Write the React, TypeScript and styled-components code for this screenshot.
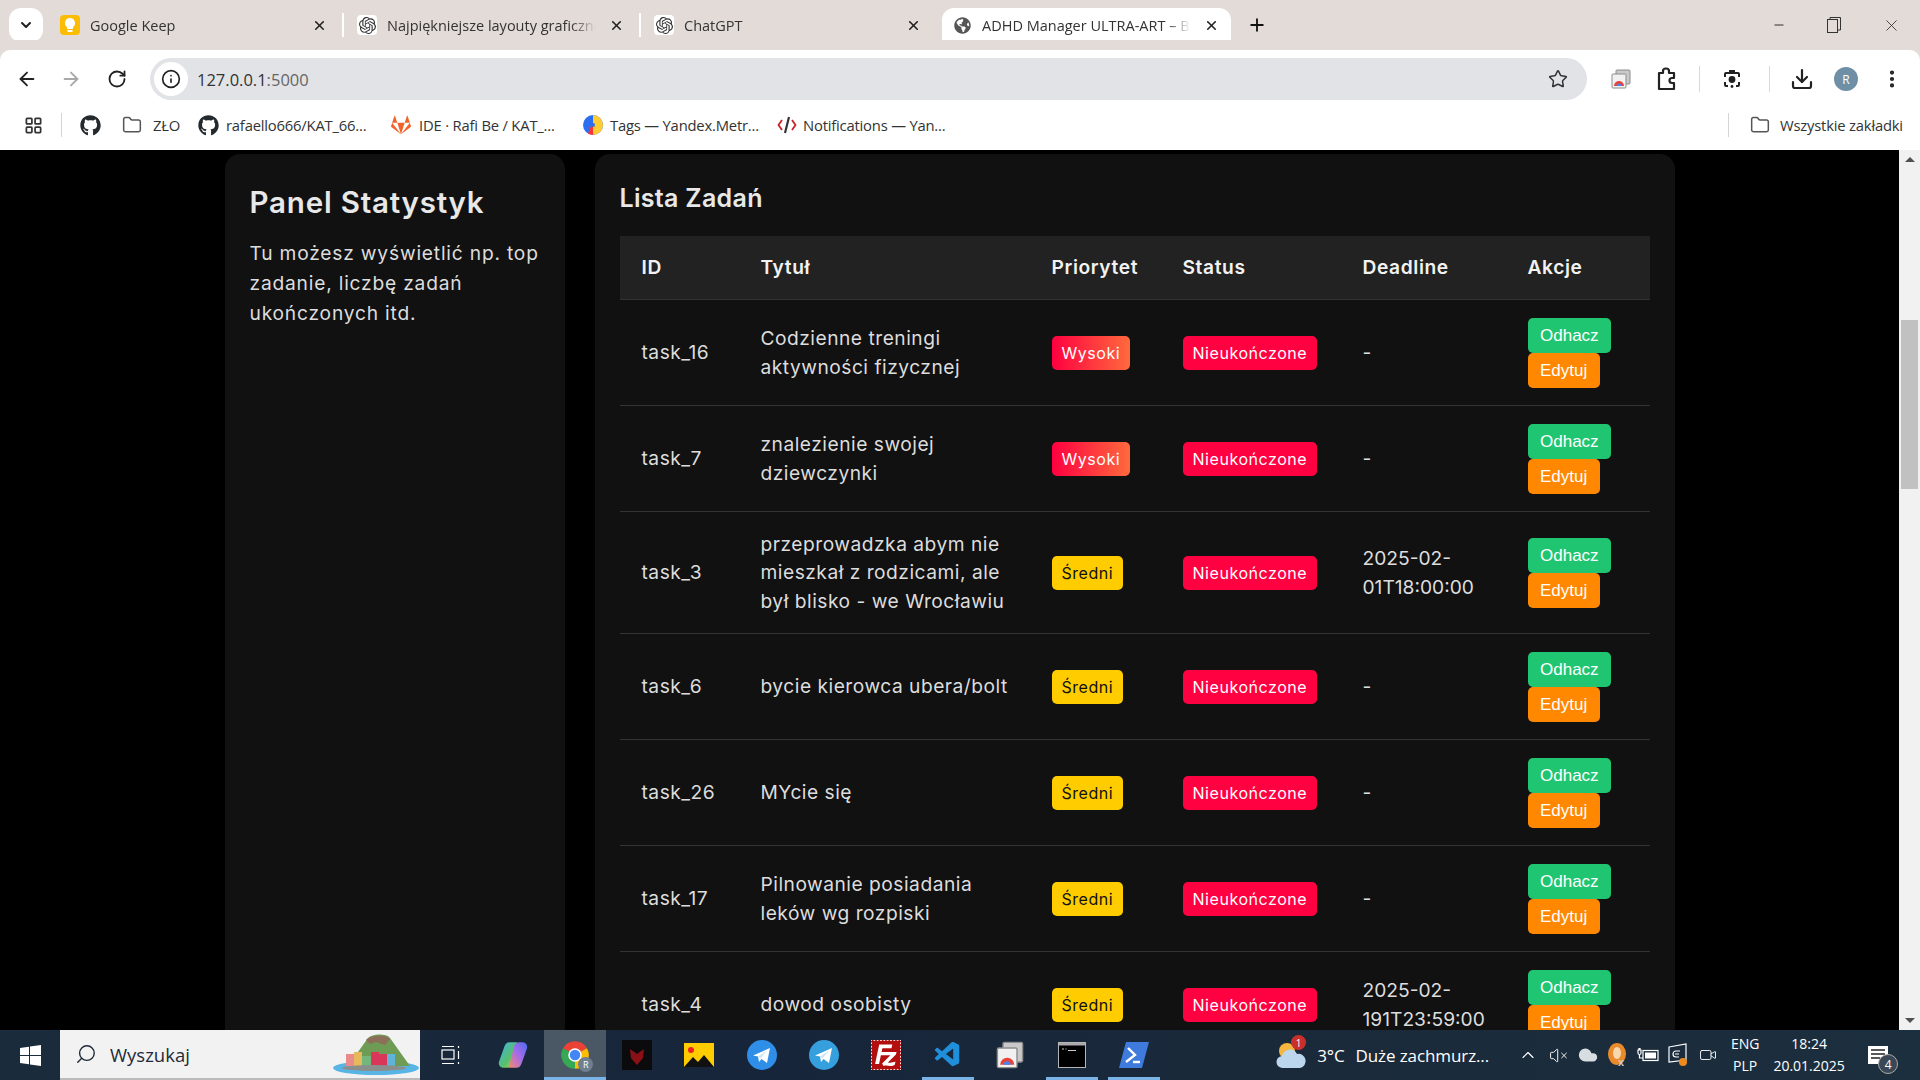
import React from "react";
import styled, { createGlobalStyle } from "styled-components";
import { FaGithub, FaGitlab, FaGlobeAmericas } from "react-icons/fa";
import { SiOpenai, SiFilezilla } from "react-icons/si";
import { VscVscode } from "react-icons/vsc";
import {
  ArrowLeft, ArrowRight, RotateCw, Info, Star, Download, EllipsisVertical, X, Plus, ChevronDown,
  Minus, Search, Folder, LayoutGrid, ChevronUp, VolumeX, Cloud, Video,
} from "lucide-react";

const Global = createGlobalStyle`
  html, body { margin: 0; padding: 0; height: 100%; overflow: hidden; background: #000; }
  #root { height: 100%; }
  * { box-sizing: border-box; }
`;

const ui = `"Open Sans", "Noto Sans", "Liberation Sans", sans-serif`;
const web = `Inter, "Open Sans", "Liberation Sans", sans-serif`;

const Page = styled.div`
  width: 1920px; height: 1080px; display: flex; flex-direction: column; overflow: hidden; font-family: ${ui};
`;

/* ---------- tab strip ---------- */
const TabStrip = styled.div`
  height: 50px; flex: none; background: #e3dbd8; display: flex; align-items: flex-start; padding: 8px 0 0 9px;
`;
const TabToggle = styled.div`
  width: 34px; height: 34px; border-radius: 12px; background: #fff; color: #222; display: flex;
  align-items: center; justify-content: center; margin-right: 17px; flex: none;
`;
const Tab = styled.div<{ $active?: boolean }>`
  width: ${p => (p.$active ? "289px" : "282px")}; height: ${p => (p.$active ? "42px" : "34px")}; flex: none;
  display: flex; align-items: center; padding: ${p => (p.$active ? "0 12px 8px 10px" : "0 15px 0 0")};
  background: ${p => (p.$active ? "#fff" : "transparent")};
  border-radius: ${p => (p.$active ? "12px 12px 0 0" : "0")};
  margin-left: ${p => (p.$active ? "6px" : "0")};
`;
const Favicon = styled.div<{ $bg?: string }>`
  width: 20px; height: 20px; flex: none; border-radius: 4px; background: ${p => p.$bg ?? "#fff"}; color: #333;
  display: flex; align-items: center; justify-content: center; margin-right: 10px;
`;
const TabTitle = styled.div`
  flex: 1; min-width: 0; font-size: 14.5px; color: #333; white-space: nowrap; overflow: hidden;
  -webkit-mask-image: linear-gradient(90deg, #000 88%, transparent 100%);
  mask-image: linear-gradient(90deg, #000 88%, transparent 100%);
`;
const TabClose = styled.div`
  width: 16px; height: 16px; margin-left: 12px; color: #222; flex: none; display: flex; align-items: center; justify-content: center;
`;
const TabSep = styled.div`
  width: 2px; height: 24px; background: #fff; margin: 5px 13px 0 0; flex: none;
`;
const NewTab = styled.div`
  width: 24px; height: 34px; margin-left: 14px; color: #111; display: flex; align-items: center; justify-content: center; flex: none;
`;
const WinButtons = styled.div`
  margin-left: auto; display: flex; align-items: center; height: 34px; color: #333; flex: none;
`;
const WinBtn = styled.div<{ $w: number }>`
  width: ${p => p.$w}px; display: flex; justify-content: center;
`;

/* ---------- toolbar ---------- */
const Toolbar = styled.div`
  height: 50px; flex: none; background: #fff; display: flex; align-items: flex-end;
  padding: 0 15px 0 16px; border-radius: 10px 10px 0 0; box-shadow: 0 -10px 0 0 #e3dbd8;
`;
const ToolRow = styled.div`
  height: 42px; display: flex; align-items: center; width: 100%;
`;
const NavBtn = styled.div<{ $w: number; $muted?: boolean }>`
  width: ${p => p.$w}px; flex: none; display: flex; justify-content: flex-start; color: ${p => (p.$muted ? "#a9a9a9" : "#222")};
`;
const Omnibox = styled.div`
  width: 1437px; height: 42px; border-radius: 21px; background: #e1e3e6; flex: none; display: flex; align-items: center;
  padding: 0 19px 0 4px;
`;
const InfoChip = styled.div`
  width: 34px; height: 34px; border-radius: 50%; background: #fff; color: #222; display: flex; align-items: center;
  justify-content: center; margin-right: 9px;
`;
const Url = styled.div`
  font-size: 16.5px; color: #333; flex: 1; span { color: #666; }
`;
const ToolIcon = styled.div<{ $ml: number }>`
  margin-left: ${p => p.$ml}px; flex: none; display: flex; color: #222;
`;
const ToolSep = styled.div<{ $ml: number }>`
  margin-left: ${p => p.$ml}px; width: 1px; height: 26px; background: #d8d8d8; flex: none;
`;
const Avatar = styled.div<{ $ml: number }>`
  margin-left: ${p => p.$ml}px; width: 24px; height: 24px; border-radius: 50%; background: #6f8fa6; color: #fff; font-size: 12px;
  display: flex; align-items: center; justify-content: center; flex: none;
`;

/* ---------- bookmarks ---------- */
const Bookmarks = styled.div`
  height: 50px; flex: none; background: #fff; display: flex; align-items: center; padding: 0 0 0 24px; font-size: 14.8px; color: #333;
`;
const AppsIcon = styled.div`
  width: 19px; flex: none; display: flex; color: #333;
`;
const Mark = styled.div<{ $ml: number; $gap?: number }>`
  margin-left: ${p => p.$ml}px; display: flex; align-items: center; gap: ${p => p.$gap ?? 8}px; white-space: nowrap; flex: none;
`;
const MarkSep = styled.div<{ $ml: number }>`
  margin-left: ${p => p.$ml}px; width: 1px; height: 24px; background: #d4d4d4; flex: none;
`;
const MarkLabel = styled.span<{ $w: number }>`
  display: inline-block; width: ${p => p.$w}px; letter-spacing: -0.2px;
`;

/* ---------- page ---------- */
const Viewport = styled.div`
  flex: 1; min-height: 0; display: flex; background: #000;
`;
const Content = styled.div`
  flex: 1; min-width: 0; overflow: hidden; padding-top: 4px; font-family: ${web};
`;
const Columns = styled.div`
  width: 1450px; margin: 0 auto; display: grid; grid-template-columns: 340px 1080px; gap: 30px;
`;
const Sidebar = styled.aside`
  background: #111; border-radius: 15px; padding: 27px 25px; height: 1000px; color: #ddd;
`;
const SideTitle = styled.h2`
  margin: 0 0 15px; font-size: 29.5px; line-height: 42px; font-weight: 600; color: #e8e8e8; letter-spacing: 0.8px;
`;
const SideText = styled.p`
  margin: 0; font-size: 19.2px; line-height: 30px; color: #ddd; letter-spacing: 0.8px;
`;
const MainPanel = styled.main`
  background: #111; border-radius: 15px; padding: 27px 25px; height: 1000px;
`;
const ListTitle = styled.h3`
  margin: 0 0 21px; font-size: 25px; line-height: 34px; font-weight: 600; color: #e8e8e8; letter-spacing: 0.3px;
`;
const Table = styled.table`
  width: 1030px; border-collapse: collapse; table-layout: fixed; font-size: 19.2px; line-height: 28.8px; color: #ddd;
`;
const Th = styled.th<{ $w: number }>`
  width: ${p => p.$w}px; height: 63px; background: #222; color: #f2f2f2; font-weight: 600; text-align: left; padding: 0 22px;
  border-bottom: 1px solid #333; letter-spacing: 0.6px;
`;
const Tr = styled.tr`
  border-bottom: 1px solid #333;
`;
const Td = styled.td`
  padding: 18px 22px 17px; vertical-align: middle; letter-spacing: 0.5px;
`;
const TitleTd = styled(Td)`
  padding-right: 14px;
`;
const DeadlineTd = styled(Td)`
  letter-spacing: 0;
  padding-right: 14px;
`;
const Badge = styled.span<{ $bg: string; $dark?: boolean }>`
  display: inline-block; height: 34px; line-height: 34px; padding: 0 10px; border-radius: 5px; font-size: 16px;
  background: ${p => p.$bg}; color: ${p => (p.$dark ? "#111" : "#fff")}; letter-spacing: 0.55px; vertical-align: middle;
  white-space: nowrap;
`;
const ActionBtn = styled.div<{ $bg: string }>`
  width: fit-content; height: 35px; line-height: 35px; padding: 0 12.5px; border-radius: 5px; background: ${p => p.$bg}; color: #fff;
  font-family: "Liberation Sans", Arial, sans-serif; font-size: 17px; letter-spacing: 0;
`;

/* ---------- scrollbar ---------- */
const Scrollbar = styled.div`
  width: 21px; flex: none; background: #f1f1f1; display: flex; flex-direction: column; align-items: center; padding-top: 7px;
`;
const Thumb = styled.div`
  width: 17px; height: 169px; background: #c1c1c1; margin-top: 158px;
`;
const ArrowTop = styled.div`
  width: 0; height: 0; border-left: 5px solid transparent; border-right: 5px solid transparent; border-bottom: 5px solid #505050;
`;
const ArrowBottom = styled.div`
  width: 0; height: 0; margin-top: auto; margin-bottom: 7px; border-left: 5px solid transparent; border-right: 5px solid transparent; border-top: 5px solid #505050;
`;

/* ---------- taskbar ---------- */
const Taskbar = styled.div`
  height: 50px; flex: none; display: flex; align-items: center;
  background: linear-gradient(90deg, #1a2c3b 0%, #17253a 40%, #1a2a3a 70%, #1c2f3e 100%); color: #fff; font-family: ${ui};
`;
const StartBtn = styled.div`
  width: 60px; height: 50px; display: flex; align-items: center; justify-content: center; flex: none;
`;
const SearchBox = styled.div`
  width: 360px; height: 50px; background: #f2f2f2; color: #1e2a38; display: flex; align-items: center; padding-left: 15px; font-size: 18.5px; flex: none;
  border-bottom: 2px solid #bbb;
`;
const SearchLabel = styled.span`
  margin-left: 13px; flex: 1;
`;
const TaskSlot = styled.div<{ $active?: boolean; $open?: boolean }>`
  width: 62.1px; height: 50px; flex: none; position: relative; display: flex; align-items: center; justify-content: center;
  background: ${p => (p.$active ? "#4a5866" : "transparent")};
  &::after {
    content: ""; position: absolute; bottom: 0; height: 3px; background: #7ab4e6;
    left: ${p => (p.$active ? "0" : "5px")}; right: ${p => (p.$active ? "0" : "5px")};
    display: ${p => (p.$open || p.$active ? "block" : "none")};
  }
`;
const SlotBadge = styled.div`
  position: absolute; right: 13px; bottom: 8px; width: 15px; height: 15px; border-radius: 50%; background: #6d7f90; color: #fff;
  font-size: 9px; display: flex; align-items: center; justify-content: center;
`;
const Weather = styled.div`
  margin-left: 110px; display: flex; align-items: center; font-size: 17px; flex: none; position: relative; width: 238px;
`;
const WeatherBadge = styled.div`
  position: absolute; left: 16px; top: -5px; width: 15px; height: 15px; border-radius: 50%; background: #c9302c; color: #fff; font-size: 10px;
  display: flex; align-items: center; justify-content: center;
`;
const WeatherText = styled.span<{ $ml: number }>`
  margin-left: ${p => p.$ml}px; white-space: nowrap; letter-spacing: -0.1px;
`;
const Tray = styled.div`
  display: flex; align-items: center; flex: none; color: #fff;
`;
const TrayItem = styled.div`
  width: 30px; display: flex; justify-content: center; flex: none;
`;
const Clock = styled.div<{ $w: number; $ml?: number }>`
  width: ${p => p.$w}px; margin-left: ${p => p.$ml ?? 0}px; text-align: center; font-size: 14px; line-height: 22px; flex: none;
`;
const Notify = styled.div`
  width: 40px; margin-left: 7px; position: relative; display: flex; justify-content: flex-start; padding-left: 8px; flex: none;
`;
const NotifyCount = styled.div`
  position: absolute; left: 18px; top: 8px; width: 20px; height: 20px; border-radius: 50%; background: #3a4754; border: 1px solid #aaa;
  font-size: 12px; display: flex; align-items: center; justify-content: center;
`;

/* ---------- drawings ---------- */
const ChromeLogo = ({ s = 24 }: { s?: number }) => (
  <svg width={s} height={s} viewBox="0 0 24 24">
    <path d="M12 12L2.47 6.5A11 11 0 0 1 21.53 6.5Z" fill="#ea4335" />
    <path d="M12 12L21.53 6.5A11 11 0 0 1 12 23Z" fill="#fbbc04" />
    <path d="M12 12L12 23A11 11 0 0 1 2.47 6.5Z" fill="#34a853" />
    <circle cx="12" cy="12" r="5.4" fill="#fff" />
    <circle cx="12" cy="12" r="4.2" fill="#4285f4" />
  </svg>
);
const KeepIcon = () => (
  <svg width="14" height="16" viewBox="0 0 14 16">
    <path d="M7 1a5 5 0 0 0-3 9v2h6v-2a5 5 0 0 0-3-9z" fill="#fff" />
    <rect x="4.5" y="13" width="5" height="2" fill="#fff" />
  </svg>
);
const YandexIcon = () => (
  <svg width="20" height="20" viewBox="0 0 20 20">
    <circle cx="10" cy="10" r="10" fill="#2a6ff0" />
    <path d="M10 0a10 10 0 0 1 0 20V12a2 2 0 0 0 0-4z" fill="#fc3" />
    <path d="M10 12v8a10 10 0 0 1-5-1.4L8 11z" fill="#f33" />
  </svg>
);
const DevIcon = () => (
  <svg width="20" height="20" viewBox="0 0 20 20" fill="none" strokeWidth="1.8">
    <path d="M5 5L1.5 10L5 15" stroke="#c22" />
    <path d="M15 5L18.5 10L15 15" stroke="#c22" />
    <path d="M12 2L8 18" stroke="#333" strokeWidth="2.2" />
  </svg>
);
const PuzzleIcon = () => (
  <svg width="22" height="24" viewBox="0 0 22 24" fill="none" stroke="#222" strokeWidth="2.2" strokeLinejoin="round">
    <path d="M3 6h4V4a3 2.500 0 0 1 6 0v2h5v5h-2a2.500 2.500 0 0 0 0 5h2v6H3z" />
  </svg>
);
const CameraIcon = () => (
  <svg width="22" height="22" viewBox="0 0 22 22" fill="none" stroke="#222" strokeWidth="2">
    <path d="M4 9V6a1 1 0 0 1 1-1h12a1 1 0 0 1 1 1v3M4 14v3a1 1 0 0 0 1 1h2M15 18h2a1 1 0 0 0 1-1v-3" />
    <circle cx="11" cy="11.5" r="2.4" fill="#222" />
    <rect x="8" y="2" width="6" height="3" fill="#222" stroke="none" />
    <circle cx="11" cy="18.5" r="1.4" fill="#222" stroke="none" />
  </svg>
);
const MediaIcon = ({ s = 20 }: { s?: number }) => (
  <svg width={s} height={s} viewBox="0 0 20 20">
    <rect x="5" y="1" width="14" height="14" rx="1" fill="#c9c9c9" stroke="#8d8d8d" />
    <rect x="1" y="5" width="14" height="14" rx="1" fill="#f1f1f1" stroke="#8d8d8d" />
    <path d="M3 17a5 5 0 0 1 10 0z" fill="#ea4335" />
    <path d="M5.5 17a2.5 2.5 0 0 1 5 0z" fill="#4285f4" />
  </svg>
);
const WinLogo = () => (
  <svg width="21" height="21" viewBox="0 0 21 21" fill="#fff">
    <path d="M0 3l9-1.3V10H0zM10 1.5L21 0v10H10zM0 11h9v8.3L0 18zM10 11h11v10l-11-1.5z" />
  </svg>
);
const TaskView = () => (
  <svg width="20" height="20" viewBox="0 0 20 20" fill="none" stroke="#fff" strokeWidth="1.2">
    <rect x="1" y="5" width="12" height="9" />
    <path d="M1 1.5h12M1 18.5h12M17.5 1v2M17.5 6v8M17.5 17v2" />
  </svg>
);
const Copilot = () => (
  <svg width="30" height="30" viewBox="0 0 28 28">
    <defs>
      <linearGradient id="cp1" x1="0" y1="0" x2="1" y2="1">
        <stop offset="0" stopColor="#3fb6ef" /><stop offset=".6" stopColor="#58c06a" /><stop offset="1" stopColor="#f5c63f" />
      </linearGradient>
      <linearGradient id="cp2" x1="1" y1="0" x2="0" y2="1">
        <stop offset="0" stopColor="#4a6cf0" /><stop offset=".5" stopColor="#a86be8" /><stop offset="1" stopColor="#f58a6a" />
      </linearGradient>
    </defs>
    <path d="M11 2h7l-5 20c-.6 2-2 4-5 4H5c-3 0-5-3-4-6L6 6c.7-2 2-4 5-4z" fill="url(#cp1)" />
    <path d="M17 26h-7l5-20c.6-2 2-4 5-4h3c3 0 5 3 4 6l-5 14c-.7 2-2 4-5 4z" fill="url(#cp2)" />
  </svg>
);
const PhotosIcon = () => (
  <svg width="30" height="24" viewBox="0 0 30 24">
    <rect width="30" height="24" fill="#ffcc00" />
    <circle cx="7" cy="7" r="3" fill="#e22" />
    <path d="M0 24l9-10 5 5 6-7 10 12z" fill="#111" />
  </svg>
);
const TelegramRound = ({ bg }: { bg: string }) => (
  <svg width="30" height="30" viewBox="0 0 30 30">
    <circle cx="15" cy="15" r="15" fill={bg} />
    <path d="M6 15.5L23 8l-3 15-5.5-4-2.5 3-1-5.5z" fill="#fff" />
    <path d="M11 16.500L20 10.500l-6.500 8z" fill="#cfe6f7" />
  </svg>
);
const CmdIcon = () => (
  <svg width="28" height="26" viewBox="0 0 28 26">
    <rect x=".5" y=".5" width="27" height="25" fill="#000" stroke="#b5b5b5" />
    <rect x="1" y="1" width="26" height="2.5" fill="#aaa" />
    <path d="M4 7h2M7.500 7h1M10 8.500h8" stroke="#ccc" strokeWidth="1" />
  </svg>
);
const PsIcon = () => (
  <svg width="30" height="26" viewBox="0 0 30 26">
    <path d="M7 0h23l-7 26H0z" fill="#3f7bdc" />
    <path d="M9 6l7 7-9 7" fill="none" stroke="#fff" strokeWidth="2.4" />
    <path d="M14 20h7" stroke="#fff" strokeWidth="2.4" />
  </svg>
);
const DarkApp = () => (
  <svg width="30" height="30" viewBox="0 0 30 30">
    <rect width="30" height="30" fill="#0b0b0d" />
    <path d="M8 9l7 5 7-5-1 9-6 7-6-7z" fill="#8a1016" />
  </svg>
);
const Island = () => (
  <svg width="90" height="48" viewBox="0 0 90 48">
    <ellipse cx="46" cy="38" rx="43" ry="7" fill="#58b4e4" />
    <path d="M18 36L38 8c4-4 18-5 22 0l20 28z" fill="#6f9c55" />
    <path d="M36 10c4-5 20-6 24-1l-5 6-9-3-6 2z" fill="#8c6f58" />
    <rect x="16" y="24" width="8" height="12" fill="#e98b8b" />
    <rect x="24" y="22" width="8" height="14" fill="#e8b85c" />
    <rect x="32" y="26" width="9" height="10" fill="#73b77c" />
    <rect x="41" y="22" width="8" height="14" fill="#d9365a" />
    <rect x="49" y="24" width="8" height="12" fill="#d9365a" />
    <rect x="57" y="24" width="8" height="12" fill="#5fb3d9" />
    <ellipse cx="44" cy="38" rx="32" ry="3" fill="#8a8f8c" />
  </svg>
);
const WeatherIcon = () => (
  <svg width="32" height="30" viewBox="0 0 32 30">
    <circle cx="12" cy="11" r="8" fill="#f4b63f" />
    <path d="M8 28a6 6 0 0 1-1-12 8 8 0 0 1 15-2 7 7 0 0 1 3 14z" fill="#bcd6ee" />
  </svg>
);
const OrangeTray = () => (
  <svg width="22" height="24" viewBox="0 0 22 24">
    <ellipse cx="10" cy="11" rx="9" ry="11" fill="#e98a2b" />
    <ellipse cx="10" cy="10" rx="4" ry="6" fill="#f6d7ae" />
    <text x="11" y="23" fontSize="11" fontWeight="700" fill="#ccc" fontFamily="Liberation Sans">x</text>
  </svg>
);
const BatteryTray = () => (
  <svg width="22" height="16" viewBox="0 0 22 16" fill="none" stroke="#fff" strokeWidth="1.2">
    <rect x="6" y="3.500" width="15" height="10" />
    <rect x="8" y="5.500" width="11" height="6" fill="#fff" stroke="none" />
    <path d="M1 3h3v3a1.500 1.500 0 0 1-3 0zM2 1v2M3 1v2M2.500 7.500V11h3.500" />
  </svg>
);
const SyncTray = () => (
  <svg width="22" height="24" viewBox="0 0 22 24" fill="none" stroke="#fff" strokeWidth="1.2">
    <path d="M2 4l17-3v16l-17 2z" />
    <path d="M13 8h-4a3 3 0 0 0 0 6h3M8 11h4" />
    <circle cx="16" cy="19" r="4" fill="#f08a1d" stroke="none" />
  </svg>
);
const NotifyIcon = () => (
  <svg width="20" height="18" viewBox="0 0 20 18">
    <rect width="20" height="18" fill="#fff" />
    <path d="M3 4h14M3 8h14M3 12h9" stroke="#222" strokeWidth="1.3" />
  </svg>
);

const tasks = [
  { id: "task_16", title: "Codzienne treningi aktywności fizycznej", pr: "Wysoki", dl: "-" },
  { id: "task_7", title: "znalezienie swojej dziewczynki", pr: "Wysoki", dl: "-" },
  { id: "task_3", title: "przeprowadzka abym nie mieszkał z rodzicami, ale był blisko - we Wrocławiu", pr: "Średni", dl: "2025-02-01T18:00:00" },
  { id: "task_6", title: "bycie kierowca ubera/bolt", pr: "Średni", dl: "-" },
  { id: "task_26", title: "MYcie się", pr: "Średni", dl: "-" },
  { id: "task_17", title: "Pilnowanie posiadania leków wg rozpiski", pr: "Średni", dl: "-" },
  { id: "task_4", title: "dowod osobisty", pr: "Średni", dl: "2025-02-191T23:59:00" },
];

export default function App() {
  return (
    <Page>
      <Global />
      <TabStrip>
        <TabToggle><ChevronDown size={16} strokeWidth={3} /></TabToggle>
        <Tab>
          <Favicon $bg="#fbbc04"><KeepIcon /></Favicon>
          <TabTitle>Google Keep</TabTitle>
          <TabClose><X size={15} strokeWidth={2.6} /></TabClose>
        </Tab>
        <TabSep />
        <Tab>
          <Favicon><SiOpenai size={17} /></Favicon>
          <TabTitle>Najpiękniejsze layouty graficzne</TabTitle>
          <TabClose><X size={15} strokeWidth={2.6} /></TabClose>
        </Tab>
        <TabSep />
        <Tab>
          <Favicon><SiOpenai size={17} /></Favicon>
          <TabTitle>ChatGPT</TabTitle>
          <TabClose><X size={15} strokeWidth={2.6} /></TabClose>
        </Tab>
        <Tab $active>
          <Favicon><FaGlobeAmericas size={17} color="#555" /></Favicon>
          <TabTitle>ADHD Manager ULTRA-ART – Best</TabTitle>
          <TabClose><X size={15} strokeWidth={2.6} /></TabClose>
        </Tab>
        <NewTab><Plus size={20} strokeWidth={2.2} /></NewTab>
        <WinButtons>
          <WinBtn $w={55}><Minus size={14} /></WinBtn>
          <WinBtn $w={56}>
            <svg width="14" height="16" viewBox="0 0 14 16" fill="none" stroke="#333"><rect x=".5" y="2.500" width="10" height="13" /><path d="M3 2.500V.5h10.500V13h-3" /></svg>
          </WinBtn>
          <WinBtn $w={58}><X size={19} strokeWidth={1.1} /></WinBtn>
        </WinButtons>
      </TabStrip>
      <Toolbar>
        <ToolRow>
          <NavBtn $w={44}><ArrowLeft size={22} strokeWidth={2} /></NavBtn>
          <NavBtn $w={47} $muted><ArrowRight size={22} strokeWidth={2} /></NavBtn>
          <NavBtn $w={43}><RotateCw size={20} strokeWidth={2.2} /></NavBtn>
          <Omnibox>
            <InfoChip><Info size={20} /></InfoChip>
            <Url>127.0.0.1<span>:5000</span></Url>
            <Star size={20} color="#333" strokeWidth={1.8} />
          </Omnibox>
          <ToolIcon $ml={24}><MediaIcon /></ToolIcon>
          <ToolIcon $ml={25}><PuzzleIcon /></ToolIcon>
          <ToolSep $ml={21} />
          <ToolIcon $ml={21}><CameraIcon /></ToolIcon>
          <ToolSep $ml={26} />
          <ToolIcon $ml={20}><Download size={24} strokeWidth={2.2} /></ToolIcon>
          <Avatar $ml={20}>R</Avatar>
          <ToolIcon $ml={23}><EllipsisVertical size={22} strokeWidth={2.6} /></ToolIcon>
        </ToolRow>
      </Toolbar>
      <Bookmarks>
        <AppsIcon><LayoutGrid size={19} strokeWidth={2.2} /></AppsIcon>
        <MarkSep $ml={18} />
        <Mark $ml={18}><FaGithub size={21} color="#24292e" /></Mark>
        <Mark $ml={21} $gap={11}><Folder size={20} color="#555" strokeWidth={1.8} /><MarkLabel $w={30}>ZŁO</MarkLabel></Mark>
        <Mark $ml={15} $gap={7}><FaGithub size={21} color="#24292e" /><MarkLabel $w={139}>rafaello666/KAT_66...</MarkLabel></Mark>
        <Mark $ml={26}><FaGitlab size={20} color="#f0642a" /><MarkLabel $w={135}>IDE · Rafi Be / KAT_...</MarkLabel></Mark>
        <Mark $ml={29} $gap={7}><YandexIcon /><MarkLabel $w={147}>Tags — Yandex.Metr...</MarkLabel></Mark>
        <Mark $ml={20} $gap={6}><DevIcon /><MarkLabel $w={142}>Notifications — Yan...</MarkLabel></Mark>
        <MarkSep $ml={783} />
        <Mark $ml={21} $gap={10}><Folder size={20} color="#555" strokeWidth={1.8} /><MarkLabel $w={122}>Wszystkie zakładki</MarkLabel></Mark>
      </Bookmarks>
      <Viewport>
        <Content>
          <Columns>
            <Sidebar>
              <SideTitle>Panel Statystyk</SideTitle>
              <SideText>Tu możesz wyświetlić np. top zadanie, liczbę zadań ukończonych itd.</SideText>
            </Sidebar>
            <MainPanel>
              <ListTitle>Lista Zadań</ListTitle>
              <Table>
                <thead>
                  <tr>
                    <Th $w={119}>ID</Th>
                    <Th $w={291}>Tytuł</Th>
                    <Th $w={131}>Priorytet</Th>
                    <Th $w={180}>Status</Th>
                    <Th $w={165}>Deadline</Th>
                    <Th $w={144}>Akcje</Th>
                  </tr>
                </thead>
                <tbody>
                  {tasks.map(t => (
                    <Tr key={t.id}>
                      <Td>{t.id}</Td>
                      <TitleTd>{t.title}</TitleTd>
                      <Td>
                        {t.pr === "Wysoki"
                          ? <Badge $bg="linear-gradient(90deg,#ff0040,#ff6a3d)">Wysoki</Badge>
                          : <Badge $bg="#ffcc00" $dark>Średni</Badge>}
                      </Td>
                      <Td><Badge $bg="#ff0040">Nieukończone</Badge></Td>
                      <DeadlineTd>{t.dl}</DeadlineTd>
                      <Td>
                        <ActionBtn $bg="#20c571">Odhacz</ActionBtn>
                        <ActionBtn $bg="#ff8800">Edytuj</ActionBtn>
                      </Td>
                    </Tr>
                  ))}
                </tbody>
              </Table>
            </MainPanel>
          </Columns>
        </Content>
        <Scrollbar>
          <ArrowTop />
          <Thumb />
          <ArrowBottom />
        </Scrollbar>
      </Viewport>
      <Taskbar>
        <StartBtn><WinLogo /></StartBtn>
        <SearchBox>
          <Search size={22} strokeWidth={1.5} style={{ transform: "scaleX(-1)" }} />
          <SearchLabel>Wyszukaj</SearchLabel>
          <Island />
        </SearchBox>
        <TaskSlot><TaskView /></TaskSlot>
        <TaskSlot><Copilot /></TaskSlot>
        <TaskSlot $active><ChromeLogo s={30} /><SlotBadge>R</SlotBadge></TaskSlot>
        <TaskSlot><DarkApp /></TaskSlot>
        <TaskSlot><PhotosIcon /></TaskSlot>
        <TaskSlot><TelegramRound bg="#2f8fe8" /></TaskSlot>
        <TaskSlot><TelegramRound bg="#36a0de" /></TaskSlot>
        <TaskSlot><SiFilezilla size={30} color="#b30f0f" style={{ background: "#fff" }} /></TaskSlot>
        <TaskSlot $open><VscVscode size={30} color="#1f8fdc" /></TaskSlot>
        <TaskSlot><MediaIcon s={28} /></TaskSlot>
        <TaskSlot $open><CmdIcon /></TaskSlot>
        <TaskSlot $open><PsIcon /></TaskSlot>
        <Weather>
          <WeatherIcon />
          <WeatherBadge>1</WeatherBadge>
          <WeatherText $ml={10}>3°C</WeatherText>
          <WeatherText $ml={11}>Duże zachmurz...</WeatherText>
        </Weather>
        <Tray>
          <TrayItem><ChevronUp size={20} strokeWidth={1.4} /></TrayItem>
          <TrayItem><VolumeX size={19} strokeWidth={1.2} /></TrayItem>
          <TrayItem><Cloud size={22} fill="#d8dde2" strokeWidth={0} /></TrayItem>
          <TrayItem><OrangeTray /></TrayItem>
          <TrayItem><BatteryTray /></TrayItem>
          <TrayItem><SyncTray /></TrayItem>
          <TrayItem><Video size={18} strokeWidth={1.2} /></TrayItem>
        </Tray>
        <Clock $w={40} $ml={2}>ENG<br />PLP</Clock>
        <Clock $w={88} $ml={0}>18:24<br />20.01.2025</Clock>
        <Notify>
          <NotifyIcon />
          <NotifyCount>4</NotifyCount>
        </Notify>
      </Taskbar>
    </Page>
  );
}
